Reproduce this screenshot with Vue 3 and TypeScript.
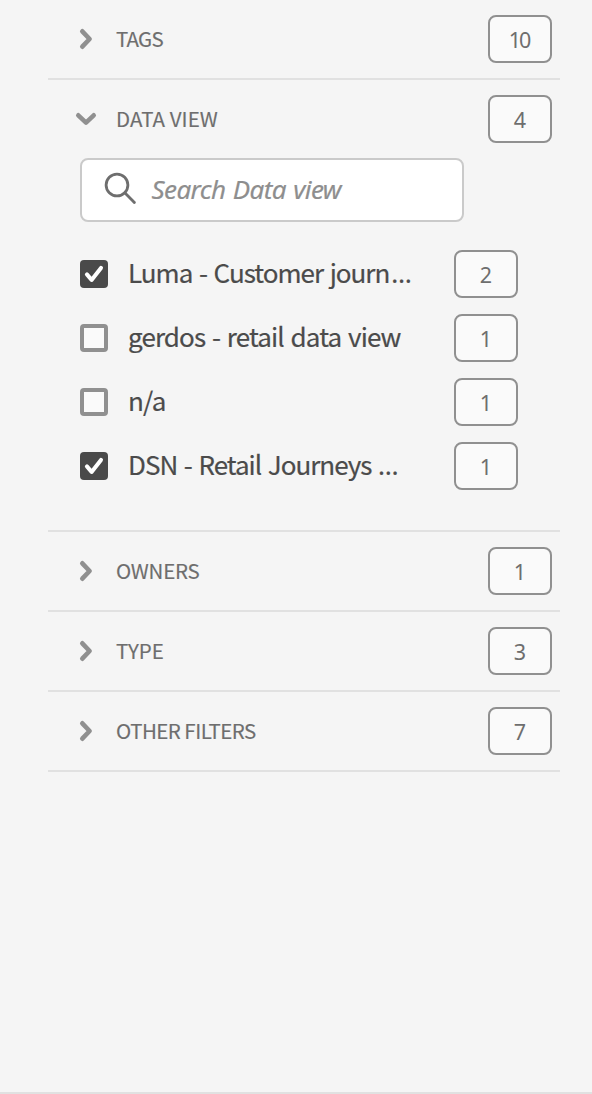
<script setup lang="ts">
import { ref } from 'vue'

interface Option {
  id: string
  label: string
  truncated: boolean
  count: number
  checked: boolean
}

interface Section {
  id: string
  title: string
  count: number
  open: boolean
}

const sections = ref<Section[]>([
  { id: 'tags', title: 'TAGS', count: 10, open: false },
  { id: 'data-view', title: 'DATA VIEW', count: 4, open: true },
  { id: 'owners', title: 'OWNERS', count: 1, open: false },
  { id: 'type', title: 'TYPE', count: 3, open: false },
  { id: 'other', title: 'OTHER FILTERS', count: 7, open: false },
])

const options = ref<Option[]>([
  { id: 'luma', label: 'Luma - Customer journ', truncated: true, count: 2, checked: true },
  { id: 'gerdos', label: 'gerdos - retail data view', truncated: false, count: 1, checked: false },
  { id: 'na', label: 'n/a', truncated: false, count: 1, checked: false },
  { id: 'dsn', label: 'DSN - Retail Journeys ', truncated: true, count: 1, checked: true },
])
</script>

<template>
  <aside class="panel">
    <section v-for="s in sections" :key="s.id" class="section">
      <header class="head" @click="s.open = !s.open">
        <svg class="chevron" viewBox="0 0 24 24">
          <path v-if="s.open" d="M4.3 8.3 L12 15.6 L19.7 8.3" />
          <path v-else d="M8.3 4.3 L15.6 12 L8.3 19.7" />
        </svg>
        <span class="title" :class="s.id">{{ s.title }}</span>
        <span class="badge">{{ s.count }}</span>
      </header>
      <div v-if="s.open" class="body">
        <div class="search">
          <svg class="lens" viewBox="0 0 34 34">
            <circle cx="14" cy="13" r="10.9" />
            <path d="M21.8 20.8 L31.4 30.6" />
          </svg>
          <span class="placeholder">Search Data view</span>
        </div>
        <div v-for="o in options" :key="o.id" class="option" @click="o.checked = !o.checked">
          <span class="box" :class="{ checked: o.checked }">
            <svg v-if="o.checked" viewBox="0 0 28 28">
              <path d="M6.9 14.4 L11.6 19.9 L21 7.9" />
            </svg>
          </span>
          <span class="label" :class="o.id">{{ o.label }}<span v-if="o.truncated" class="dots">…</span></span>
          <span class="badge">{{ o.count }}</span>
        </div>
      </div>
    </section>
  </aside>
</template>

<style>
body {
  margin: 0;
  background: #f5f5f5;
}
</style>

<style scoped>
.panel {
  box-sizing: border-box;
  height: 1094px;
  padding: 0 32px 0 48px;
  background: #f5f5f5;
  border-bottom: 2px solid #e1e1e1;
  font-family: 'Noto Sans CJK JP', 'Noto Sans', sans-serif;
}
.section {
  border-bottom: 2px solid #e1e1e1;
}
.head {
  display: flex;
  align-items: center;
  height: 78px;
  padding: 0 8px 0 26px;
}
.chevron {
  width: 24px;
  height: 24px;
  flex: none;
  fill: none;
  stroke: #909090;
  stroke-width: 4.6;
  stroke-linecap: round;
  stroke-linejoin: round;
}
.title {
  flex: 1;
  margin-left: 18px;
  padding-bottom: 2px;
  font-size: 20.5px;
  line-height: 28px;
  color: #6e6e6e;
  white-space: nowrap;
  -webkit-text-stroke: 0.15px #6e6e6e;
}
.title.tags {
  letter-spacing: -0.75px;
}
.title.data-view {
  letter-spacing: 0.05px;
}
.title.owners {
  letter-spacing: -0.25px;
}
.title.other {
  letter-spacing: -0.53px;
}
.badge {
  box-sizing: border-box;
  width: 64px;
  height: 48px;
  flex: none;
  padding-right: 2px;
  border: 2px solid #909090;
  border-radius: 8px;
  background: #fafafa;
  color: #6e6e6e;
  font-family: 'Noto Sans', sans-serif;
  font-size: 21.5px;
  line-height: 45px;
  letter-spacing: -2px;
  text-align: center;
}
.body {
  padding: 0 42px 32px 32px;
}
.search {
  box-sizing: border-box;
  display: flex;
  align-items: center;
  width: 384px;
  height: 64px;
  margin-bottom: 20px;
  padding-left: 21px;
  border: 2px solid #cacaca;
  border-radius: 8px;
  background: #fff;
}
.lens {
  width: 34px;
  height: 34px;
  margin-bottom: 2px;
  flex: none;
  fill: none;
  stroke: #6e6e6e;
  stroke-width: 2.8;
  stroke-linecap: round;
}
.placeholder {
  margin-left: 14.5px;
  padding-bottom: 2px;
  font-family: 'Noto Sans', sans-serif;
  font-size: 26px;
  font-style: italic;
  line-height: 36px;
  letter-spacing: -0.6px;
  word-spacing: 1.2px;
  color: #8e8e8e;
  white-space: nowrap;
  -webkit-text-stroke: 0.2px #8e8e8e;
}
.option {
  display: flex;
  align-items: center;
  height: 64px;
}
.box {
  box-sizing: border-box;
  width: 28px;
  height: 28px;
  flex: none;
  border: 4px solid #909090;
  border-radius: 4px;
  background: #fafafa;
}
.box.checked {
  border: 0;
  background: #4a4a4a;
}
.box svg {
  display: block;
  width: 28px;
  height: 28px;
  fill: none;
  stroke: #fff;
  stroke-width: 4;
  stroke-linecap: round;
  stroke-linejoin: round;
}
.label {
  flex: 1;
  margin-left: 20px;
  padding-bottom: 4px;
  font-size: 26px;
  line-height: 36px;
  letter-spacing: -1px;
  word-spacing: 1.8px;
  color: #4b4b4b;
  white-space: pre;
  -webkit-text-stroke: 0.2px #4b4b4b;
}
.label.gerdos {
  letter-spacing: -0.88px;
}
.label.na {
  letter-spacing: -0.75px;
}
.dots {
  margin-left: 2px;
  font-family: 'Noto Sans', sans-serif;
  line-height: 1;
}
.dsn .dots {
  margin-left: 0;
}
</style>
